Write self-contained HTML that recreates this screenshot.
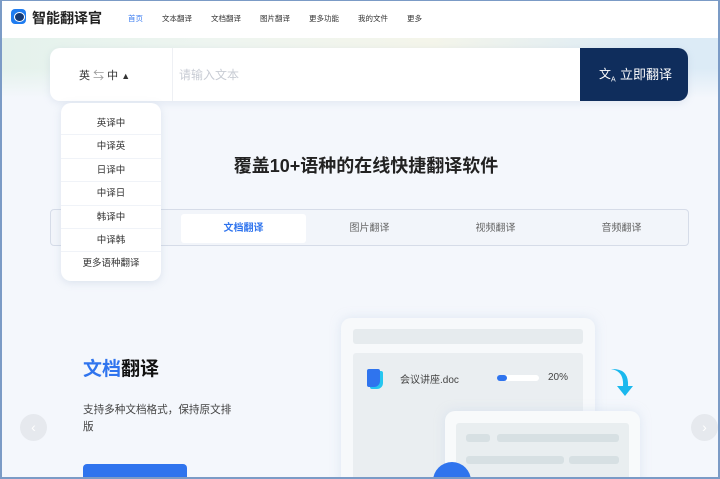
<!DOCTYPE html>
<html><head><meta charset="utf-8"><style>
*{margin:0;padding:0;box-sizing:border-box}
html{width:720px;height:479px;overflow:hidden}
body{width:720px;height:479px;overflow:hidden;position:relative;font-family:"Liberation Sans","Noto Sans CJK SC",sans-serif;background:#f4f7fc}
.frame{position:absolute;left:0;top:0;width:720px;height:479px;border:2px solid #7b9bc6;border-top:1px solid #7b9bc6;z-index:50;pointer-events:none}
.hdr{position:absolute;left:0;top:0;width:720px;height:38px;background:#fff}
.logo{position:absolute;left:11px;top:9px;width:15px;height:15px;border-radius:4px;background:#1f7cf0}
.logo:after{content:"";position:absolute;left:3px;top:3px;width:9px;height:8px;border-radius:50%;background:#163a74;border:1px solid #fff}
.brand{position:absolute;left:32px;top:8px;font-size:14px;font-weight:bold;color:#222}
.nav{position:absolute;top:13px;font-size:7.5px;color:#333}
.hero{position:absolute;left:0;top:38px;width:720px;height:60px;background:linear-gradient(90deg,#e4f2ec 0%,#eef5f0 30%,#f4f5ea 60%,#dcebf6 90%)}
.hero:after{content:"";position:absolute;left:0;bottom:0;width:720px;height:30px;background:linear-gradient(#f4f7fc00,#f4f7fc)}
.search{position:absolute;left:50px;top:48px;width:638px;height:53px;background:#fff;border-radius:10px;box-shadow:0 2px 8px rgba(150,170,200,.2);overflow:hidden}
.btn{position:absolute;right:0;top:0;width:108px;height:53px;background:#0f2d5c;color:#fff;font-size:13px;line-height:53px;padding-left:40px}
.drop{position:absolute;left:61px;top:103px;width:100px;height:178px;background:#fff;border-radius:10px;box-shadow:0 2px 8px rgba(150,170,200,.25);z-index:5}
.drop div{height:23.4px;line-height:23.4px;text-align:center;font-size:9.5px;color:#333;border-bottom:1px solid #f0f3f8}
.title{position:absolute;left:0;width:720px;top:152px;text-align:center;font-size:18px;font-weight:bold;color:#222;padding-left:12px}
.tabs{position:absolute;left:50px;top:209px;width:639px;height:37px;border:1px solid #d6dce8;border-radius:4px;background:#f2f5fa}
.tab{position:absolute;top:4px;width:125px;height:29px;line-height:29px;text-align:center;font-size:10px;color:#666}
.card{position:absolute;background:#f7f9fb;border-radius:10px;box-shadow:0 0 10px rgba(200,215,235,.5)}
.bar{position:absolute;background:#e6ebee;border-radius:3px}
</style></head><body>
<div class="hero"></div>
<div class="hdr">
<div class="logo"></div><div class="brand">智能翻译官</div>
<div class="nav" style="left:128px;color:#3b7cf0">首页</div>
<div class="nav" style="left:162px">文本翻译</div>
<div class="nav" style="left:211px">文档翻译</div>
<div class="nav" style="left:260px">图片翻译</div>
<div class="nav" style="left:309px">更多功能</div>
<div class="nav" style="left:358px">我的文件</div>
<div class="nav" style="left:407px">更多</div>
</div>
<div class="search">
<div style="position:absolute;left:29px;top:19px;font-size:11px;color:#333">英 <span style="color:#999">⇆</span> 中 <span style="font-size:9px">▲</span></div>
<div style="position:absolute;left:122px;top:0;width:1px;height:53px;background:#eef0f4"></div>
<div style="position:absolute;left:129px;top:18px;font-size:12px;color:#c8ccd4">请输入文本</div>
<div class="btn"><span style="position:absolute;left:19px;font-size:12px">文<sub style="font-size:7px">A</sub></span>立即翻译</div>
</div>
<div class="drop"><div style="margin-top:9px">英译中</div><div>中译英</div><div>日译中</div><div>中译日</div><div>韩译中</div><div>中译韩</div><div style="border:none">更多语种翻译</div></div>
<div class="title">覆盖10+语种的在线快捷翻译软件</div>
<div class="tabs">
<div class="tab" style="left:130px;background:#fff;border-radius:3px;color:#2f74ee;font-weight:bold">文档翻译</div>
<div class="tab" style="left:256px">图片翻译</div>
<div class="tab" style="left:382px">视频翻译</div>
<div class="tab" style="left:508px">音频翻译</div>
</div>
<div style="position:absolute;left:83px;top:354px;font-size:19px;font-weight:bold;color:#111"><span style="color:#2f74ee">文档</span>翻译</div>
<div style="position:absolute;left:83px;top:402px;width:155px;font-size:10.6px;line-height:17px;color:#444">支持多种文档格式，保持原文排版</div>
<div style="position:absolute;left:83px;top:464px;width:104px;height:20px;background:#2f74ee;border-radius:4px"></div>
<div style="position:absolute;left:20px;top:414px;width:27px;height:27px;border-radius:50%;background:#e6e9ee;color:#fff;text-align:center;line-height:27px;font-size:14px">‹</div>
<div style="position:absolute;left:691px;top:414px;width:27px;height:27px;border-radius:50%;background:#e6e9ee;color:#fff;text-align:center;line-height:27px;font-size:14px">›</div>
<div class="card" style="left:341px;top:318px;width:254px;height:170px">
<div class="bar" style="left:12px;top:11px;width:230px;height:15px"></div>
<div class="bar" style="left:12px;top:35px;width:230px;height:140px;background:#eaeef1"></div>
<div style="position:absolute;left:26px;top:51px;width:13px;height:18px;background:#2f74ee;border-radius:2px 2px 6px 2px;box-shadow:3px 2px 0 #26c6f0"></div>
<div style="position:absolute;left:59px;top:53px;font-size:10px;color:#444">会议讲座.doc</div>
<div style="position:absolute;left:156px;top:57px;width:42px;height:6px;background:#fff;border-radius:3px"><div style="width:10px;height:6px;background:#2f74ee;border-radius:3px"></div></div>
<div style="position:absolute;left:207px;top:54px;font-size:10px;color:#444">20%</div>
</div>
<svg style="position:absolute;left:606px;top:366px" width="30" height="34" viewBox="0 0 30 34"><path d="M5 3 Q18 5 17 20 L11 20 L19 30 L27 20 L22 20 Q23 2 5 3Z" fill="#1ab8ee"/></svg>
<div class="card" style="left:445px;top:411px;width:195px;height:80px;background:#f8fafb">
<div class="bar" style="left:11px;top:12px;width:173px;height:70px;background:#e9eef0"></div>
<div class="bar" style="left:21px;top:23px;width:24px;height:8px;background:#d7e0e3"></div>
<div class="bar" style="left:52px;top:23px;width:122px;height:8px;background:#d7e0e3"></div>
<div class="bar" style="left:21px;top:45px;width:98px;height:8px;background:#d7e0e3"></div>
<div class="bar" style="left:124px;top:45px;width:50px;height:8px;background:#d7e0e3"></div>
</div>
<div style="position:absolute;left:433px;top:462px;width:38px;height:38px;border-radius:50%;background:#2f74ee"></div>
<div class="frame"></div>
</body></html>
